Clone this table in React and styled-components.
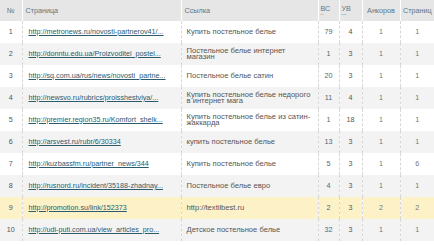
import React from "react";
import styled, { createGlobalStyle } from "styled-components";

const Global = createGlobalStyle`
  html, body { margin: 0; padding: 0; background: #fff; }
  body { font-family: "Liberation Sans", Arial, sans-serif; }
`;

const Table = styled.table`
  width: 434px;
  border-collapse: collapse;
  table-layout: fixed;
  font-family: "Liberation Sans", Arial, sans-serif;
  font-size: 7.2px;
  color: #555;
`;

const HeadRow = styled.tr`
  background: #e6e6e6;
  height: 21px;
`;

const Th = styled.th`
  font-weight: normal;
  color: #5a7886;
  text-align: ${(p) => p.$align || "left"};
  padding: 0 ${(p) => p.$pad ?? 3}px;
  border-left: 1px solid #fff;
  vertical-align: middle;
  white-space: nowrap;
  line-height: 7px;
  &:first-child { border-left: none; }
`;

const Label = styled.span`
  display: block;
  line-height: 7px;
`;

const Dots = styled.span`
  display: block;
  margin-top: 1px;
  font-size: 4px;
  line-height: 4px;
  letter-spacing: 0.3px;
  color: ${(p) => p.$color};
`;

const Row = styled.tr`
  height: 22px;
  background: ${(p) => (p.$hl ? "#fdf1c8" : p.$even ? "#f3f3f3" : "#fff")};
`;

const Td = styled.td`
  text-align: ${(p) => p.$align || "left"};
  padding: 0 ${(p) => p.$padR ?? p.$pad ?? 2}px 0 ${(p) => p.$pad ?? 2}px;
  border-left: 1px dashed #d8d8d8;
  vertical-align: middle;
  line-height: 6.5px;
  color: ${(p) => p.$color || "#555"};
  overflow: hidden;
  &:first-child { border-left: none; }
`;

const TextCell = styled(Td)`
  font-size: 7.6px;
  white-space: pre-line;
`;

const Link = styled.a`
  color: #2c5a6e;
  text-decoration: underline;
  white-space: nowrap;
`;

const rows = [
  ["1", "http://metronews.ru/novosti-partnerov41/...", "Купить постельное белье", "79", "4", "1", "1"],
  ["2", "http://donntu.edu.ua/Proizvoditel_postel...", "Постельное белье интернет\nмагазин", "1", "3", "1", "1"],
  ["3", "http://sq.com.ua/rus/news/novosti_partne...", "Постельное белье сатин", "20", "3", "1", "1"],
  ["4", "http://newsvo.ru/rubrics/proisshestviya/...", "Купить постельное белье недорого\nв интернет мага", "11", "4", "1", "1"],
  ["5", "http://premier.region35.ru/Komfort_shelk...", "Купить постельное белье из сатин-\nжаккарда", "1", "18", "1", "1"],
  ["6", "http://arsvest.ru/rubr/6/30334", "купить постельное белье", "13", "3", "1", "1"],
  ["7", "http://kuzbassfm.ru/partner_news/344", "Купить постельное белье", "5", "3", "1", "6"],
  ["8", "http://rusnord.ru/incident/35188-zhadnay...", "Постельное белье евро", "4", "3", "1", "1"],
  ["9", "http://promotion.su/link/152373", "http://textilbest.ru", "2", "3", "2", "2"],
  ["10", "http://udi-puti.com.ua/view_articles_pro...", "Детское постельное белье", "32", "3", "1", "1"],
];

export default function App() {
  return (
    <>
      <Global />
      <Table>
        <colgroup>
          <col style={{ width: 22 }} />
          <col style={{ width: 159 }} />
          <col style={{ width: 137 }} />
          <col style={{ width: 21 }} />
          <col style={{ width: 23 }} />
          <col style={{ width: 38 }} />
          <col style={{ width: 34 }} />
        </colgroup>
        <thead>
          <HeadRow>
            <Th $align="center" $pad={0}>№</Th>
            <Th>Страница</Th>
            <Th>Ссылка</Th>
            <Th $pad={2}>
              <Label>ВС</Label>
              <Dots $color="#d98a8a">••</Dots>
            </Th>
            <Th $pad={2}>
              <Label>УВ</Label>
              <Dots $color="#8fa3c8">•••</Dots>
            </Th>
            <Th $align="center" $pad={0}>Анкоров</Th>
            <Th $align="center" $pad={0}>Страниц</Th>
          </HeadRow>
        </thead>
        <tbody>
          {rows.map((r, i) => (
            <Row key={r[0]} $even={i % 2 === 1} $hl={r[0] === "9"}>
              <Td $align="center" $pad={0}>{r[0]}</Td>
              <Td $pad={6}><Link href="#">{r[1]}</Link></Td>
              <TextCell $pad={5} $padR={0}>{r[2]}</TextCell>
              <Td $align="center" $pad={0} $color="#4d6878">{r[3]}</Td>
              <Td $align="center" $pad={0}>{r[4]}</Td>
              <Td $align="center" $pad={0} $color="#777">{r[5]}</Td>
              <Td $align="center" $pad={0} $color="#777">{r[6]}</Td>
            </Row>
          ))}
        </tbody>
      </Table>
    </>
  );
}
